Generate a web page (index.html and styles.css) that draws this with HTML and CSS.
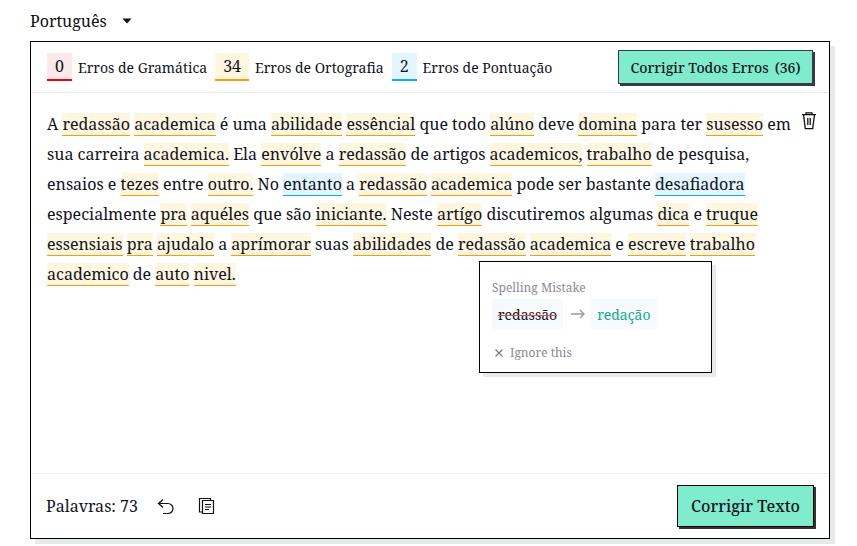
FILE: index.html
```html
<!DOCTYPE html>
<html lang="pt">
<head>
<meta charset="utf-8">
<title>Corretor</title>
<link rel="stylesheet" href="styles.css">
</head>
<body>
<div class="page">
  <div class="lang"><span>Português</span><svg class="caret" width="10" height="6" viewBox="0 0 10 6"><path d="M0.5 0.5h9L5 5.5z" fill="#111"/></svg></div>
  <section class="card">
    <header class="top">
      <div class="stats">
        <span class="badge red">0</span><span class="label">Erros de Gramática</span>
        <span class="badge orange">34</span><span class="label">Erros de Ortografia</span>
        <span class="badge blue">2</span><span class="label">Erros de Pontuação</span>
      </div>
      <button class="btn small">Corrigir Todos Erros<span class="count">(36)</span></button>
    </header>
    <main class="body">
      <p class="text">A <span class="e">redassão</span> <span class="e">academica</span> é uma <span class="e">abilidade</span> <span class="e">essêncial</span> que todo <span class="e">alúno</span> deve <span class="e">domina</span> para ter <span class="e">susesso</span> em sua carreira <span class="e">academica.</span> Ela <span class="e">envólve</span> a <span class="e">redassão</span> de artigos <span class="e">academicos,</span> <span class="e">trabalho</span> de pesquisa, ensaios e <span class="e">tezes</span> entre <span class="e">outro.</span> No <span class="p">entanto</span> a <span class="e">redassão</span> <span class="e">academica</span> pode ser bastante <span class="p">desafiadora</span> especialmente <span class="e">pra</span> <span class="e">aquéles</span> que são <span class="e">iniciante.</span> Neste <span class="e">artígo</span> discutiremos algumas <span class="e">dica</span> e <span class="e">truque</span> <span class="e">essensiais</span> <span class="e">pra</span> <span class="e">ajudalo</span> a <span class="e">aprímorar</span> suas <span class="e">abilidades</span> de <span class="e">redassão</span> <span class="e">academica</span> e <span class="e">escreve</span> <span class="e">trabalho</span> <span class="e">academico</span> de <span class="e">auto</span> <span class="e">nivel.</span></p>
      <svg class="trash" width="16" height="18" viewBox="0 0 16 18" fill="none" stroke="#111" stroke-width="1.300"><path d="M1 2.700h14M5 2.700V.8h6v1.900M2.500 2.700l1.800 14h7.400l1.800-14M6.800 6v7M9.200 6v7"/></svg>
      <aside class="pop">
        <div class="pop-title">Spelling Mistake</div>
        <div class="pop-row">
          <span class="chip wrong">redassão</span>
          <svg class="arrow" width="14" height="10" viewBox="0 0 14 10" fill="none" stroke="#9a9a9f" stroke-width="1.400"><path d="M0 5h13M9 1l4 4-4 4"/></svg>
          <span class="chip right">redação</span>
        </div>
        <div class="ignore"><svg width="8" height="8" viewBox="0 0 8 8" stroke="#777" stroke-width="1.100"><path d="M.5.5l7 7M7.500.5l-7 7"/></svg><span>Ignore this</span></div>
      </aside>
    </main>
    <footer class="bottom">
      <div class="tools">
        <span class="words">Palavras: 73</span>
        <svg class="undo" width="18" height="17" viewBox="0 0 18 17" fill="none" stroke="#111" stroke-width="1.200"><path d="M6 1.500L1.500 5.500 6 9.500M1.500 5.500h9.500a5 5 0 0 1 0 10H6"/></svg>
        <svg class="copy" width="17" height="18" viewBox="0 0 17 18" fill="none" stroke="#111" stroke-width="1.200"><path d="M4.500 15H1.500V1.500h11V3.500"/><path d="M4.500 3.500h11v13h-11z"/><path d="M7 7.500h6M7 10h6M7 12.500h4"/></svg>
      </div>
      <button class="btn large">Corrigir Texto</button>
    </footer>
  </section>
</div>
</body>
</html>
```
FILE: styles.css
```css
* { box-sizing: border-box; }
html, body { margin: 0; padding: 0; background: #fff; }
body { font-family: "Noto Serif", "Noto Serif CJK SC", "DejaVu Serif", "Liberation Serif", serif; color: #0e1320; }
.page { width: 857px; height: 546px; padding: 10px 0 0 30px; overflow: hidden; }
.lang { height: 31px; display: flex; align-items: center; gap: 15px; font-size: 16px; padding-bottom: 9px; color: #111; }
.card { width: 800px; height: 498px; border: 1px solid #000; box-shadow: 5px 5px 0 #e6eaea; display: flex; flex-direction: column; background: #fff; }
.top { height: 51px; flex: none; display: flex; align-items: center; justify-content: space-between; padding: 0 16px; border-bottom: 1px solid #e6eaea; }
.stats { display: flex; align-items: center; }
.badge { height: 28px; display: flex; align-items: center; justify-content: center; font-size: 16px; padding: 0 8px; min-width: 25px; border-bottom: 2px solid; }
.red { background: #fde9e9; border-color: #f5000f; }
.orange { background: #fff6e0; border-color: #f99b0b; }
.blue { background: #e3f5fe; border-color: #0aaef0; }
.label { font-size: 14px; margin: 0 8px 0 6px; }
.btn { font-family: inherit; color: #0e1320; background: #7fedcd; cursor: pointer; }
.small { width: 195px; height: 34px; border: 1px solid #3a3a45; box-shadow: 2px 2px 0 #3a3a45; font-size: 14px; font-weight: 500; padding: 0; }
.count { margin-left: 6px; }
.large { width: 137px; height: 42px; border: 1px solid #000; box-shadow: 2px 2px 0 #333; font-size: 16px; font-weight: 500; padding: 0; }
.body { flex: 1; position: relative; padding: 16px 16px 0; }
.text { margin: 0; width: 750px; font-size: 16px; line-height: 30px; }
.e { background: #fff6e0; border-bottom: 1px solid #f99b0b; }
.p { background: #e3f5fe; border-bottom: 1px solid #0aaef0; }
.trash { position: absolute; left: 770px; top: 19px; }
.pop { position: absolute; left: 448px; top: 168px; width: 233px; height: 112px; border: 1px solid #000; box-shadow: 4px 4px 0 #e6eaea; background: #fff; padding: 18px 12px 0; }
.pop-title { font-size: 12px; line-height: 16px; color: #8a8a90; }
.pop-row { display: flex; align-items: center; margin-top: 3px; }
.chip { height: 30px; display: flex; align-items: center; padding: 0 6px; font-size: 14px; background: #f6fafd; }
.wrong { text-decoration: line-through; text-decoration-color: #ef4a50; text-decoration-thickness: 1px; }
.right { color: #14a88a; }
.arrow { margin: 0 6px 0 8px; }
.ignore { display: flex; align-items: center; gap: 7px; margin-top: 15px; padding-left: 3px; font-size: 12px; color: #8a8a90; }
.bottom { height: 65px; flex: none; display: flex; align-items: center; justify-content: space-between; padding: 0 15px; border-top: 1px solid #eceeee; }
.tools { display: flex; align-items: center; }
.words { font-size: 16px; }
.undo { margin-left: 19px; }
.copy { margin-left: 23px; }
```
